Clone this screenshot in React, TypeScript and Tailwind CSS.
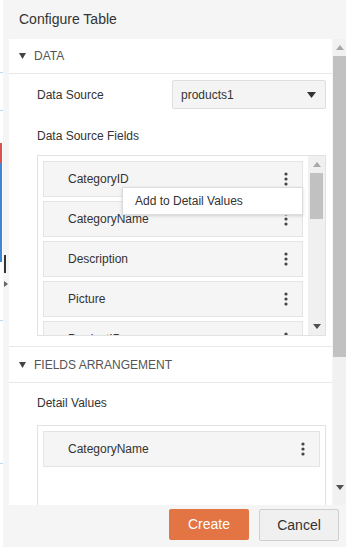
import React from "react";

const Dots = () => (
  <svg width="4" height="14" viewBox="0 0 4 14" className="shrink-0">
    <circle cx="2" cy="2" r="1.6" fill="#444" />
    <circle cx="2" cy="7" r="1.6" fill="#444" />
    <circle cx="2" cy="12" r="1.6" fill="#444" />
  </svg>
);

const Tri = ({ w = 8, h = 5, color = "#333" }: { w?: number; h?: number; color?: string }) => (
  <svg width={w} height={h} viewBox={`0 0 ${w} ${h}`} className="shrink-0">
    <polygon points={`0,0 ${w},0 ${w / 2},${h}`} fill={color} />
  </svg>
);

const TriUp = ({ w = 8, h = 5, color = "#333" }: { w?: number; h?: number; color?: string }) => (
  <svg width={w} height={h} viewBox={`0 0 ${w} ${h}`} className="shrink-0">
    <polygon points={`0,${h} ${w},${h} ${w / 2},0`} fill={color} />
  </svg>
);

const Item = ({ label }: { label: string }) => (
  <div className="h-[36px] shrink-0 flex items-center justify-between border border-[#e4e4e4] bg-[#f5f5f5] pl-[24px] pr-[14px]">
    <span className="text-[12px] text-[#333]">{label}</span>
    <Dots />
  </div>
);

export default function App() {
  return (
    <div className="relative w-[346px] h-[547px] overflow-hidden bg-white font-['Liberation_Sans',Arial,sans-serif]">
      {/* background page strip */}
      <div className="absolute left-0 top-[72px] w-[3px] h-px bg-[#bcd6ee]" />
      <div className="absolute left-0 top-[110px] w-[3px] h-px bg-[#bcd6ee]" />
      <div className="absolute left-0 top-[143px] w-[2px] h-[20px] bg-[#d9534f]" />
      <div className="absolute left-0 top-[163px] w-[2px] h-[99px] bg-[#3d87d4]" />
      <div className="absolute left-0 top-[320px] w-[3px] h-px bg-[#bcd6ee]" />
      <div className="absolute left-0 top-[463px] w-[3px] h-px bg-[#bcd6ee]" />

      {/* dialog */}
      <div className="absolute left-[3px] top-0 right-0 bottom-0 bg-[#f5f5f5] flex flex-col">
        <div className="h-[39px] shrink-0 flex items-center pl-[16px] text-[14px] text-[#333]">Configure Table</div>

        <div className="h-[466px] shrink-0 flex">
          {/* content */}
          <div className="ml-[6px] w-[323px] bg-white overflow-hidden flex flex-col">
            {/* DATA header */}
            <div className="h-[35px] shrink-0 flex items-center border-b border-[#e8e8e8] pl-[10px]">
              <Tri w={7} h={6} color="#444" />
              <span className="ml-[8px] text-[12px] text-[#555]">DATA</span>
            </div>
            <div className="pl-[28px] pr-[6px] pt-[6px] pb-[10px] flex flex-col border-b border-[#e8e8e8]">
              <div className="h-[29px] flex items-center justify-between">
                <span className="text-[12px] text-[#333]">Data Source</span>
                <div className="w-[154px] h-[29px] bg-[#f4f4f4] border border-[#dedede] rounded-[2px] flex items-center justify-between pl-[8px] pr-[9px]">
                  <span className="text-[12px] text-[#333]">products1</span>
                  <Tri w={9} h={6} color="#333" />
                </div>
              </div>
              <div className="h-[19px] mt-[17px] flex items-center text-[12px] text-[#333]">Data Source Fields</div>
              <div className="relative mt-[10px] h-[181px] border border-[#e2e2e2] flex overflow-hidden">
                <div className="flex-1 pl-[5px] pt-[5px] flex flex-col gap-[4px]">
                  <Item label="CategoryID" />
                  <Item label="CategoryName" />
                  <Item label="Description" />
                  <Item label="Picture" />
                  <Item label="ProductID" />
                </div>
                <div className="w-[17px] ml-[5px] shrink-0 bg-[#f0f0f0] flex flex-col items-center">
                  <div className="h-[17px] flex items-center justify-center">
                    <TriUp w={8} h={5} color="#a8a8a8" />
                  </div>
                  <div className="w-[13px] h-[46px] bg-[#c1c1c1]" />
                  <div className="flex-1" />
                  <div className="h-[17px] flex items-center justify-center">
                    <Tri w={8} h={5} color="#505050" />
                  </div>
                </div>
                {/* popup menu */}
                <div className="absolute left-[84px] top-[31px] w-[181px] h-[28px] bg-white border border-[#dcdcdc] shadow-[0_1px_3px_rgba(0,0,0,0.15)] flex items-center pl-[12px] text-[12px] text-[#333]">
                  Add to Detail Values
                </div>
              </div>
            </div>

            {/* FIELDS ARRANGEMENT */}
            <div className="h-[36px] shrink-0 flex items-center border-b border-[#e8e8e8] pl-[10px]">
              <Tri w={7} h={6} color="#444" />
              <span className="ml-[8px] text-[12px] text-[#555]">FIELDS ARRANGEMENT</span>
            </div>
            <div className="pl-[28px] pr-[6px] flex flex-col">
              <div className="h-[19px] mt-[10px] flex items-center text-[12px] text-[#333]">Detail Values</div>
              <div className="mt-[13px] h-[120px] border border-[#e2e2e2] px-[5px] pt-[5px] flex flex-col">
                <Item label="CategoryName" />
              </div>
            </div>
          </div>

          {/* main scrollbar */}
          <div className="ml-[1px] w-[13px] bg-[#f1f1f1] flex flex-col items-center">
            <div className="h-[17px] flex items-center justify-center">
              <TriUp w={8} h={5} color="#a8a8a8" />
            </div>
            <div className="w-[13px] h-[301px] bg-[#c1c1c1]" />
            <div className="flex-1" />
            <div className="h-[28px] flex items-start pt-[8px] justify-center">
              <Tri w={8} h={5} color="#505050" />
            </div>
          </div>
        </div>

        {/* footer */}
        <div className="flex-1 flex items-start justify-end pt-[4px] pr-[7px] gap-[10px]">
          <button className="w-[80px] h-[31px] bg-[#e37443] rounded-[2px] text-white text-[14px]">Create</button>
          <button className="w-[80px] h-[32px] bg-[#f0f0f0] border border-[#cfcfcf] rounded-[2px] text-[#333] text-[14px]">Cancel</button>
        </div>
      </div>

      {/* overlapping marks from the page behind */}
      <div className="absolute left-[4px] top-[255px] w-[2px] h-[18px] bg-[#333]" />
      <div className="absolute left-[4px] top-[281px] w-0 h-0 border-y-[3px] border-y-transparent border-l-[4px] border-l-[#666]" />
    </div>
  );
}
